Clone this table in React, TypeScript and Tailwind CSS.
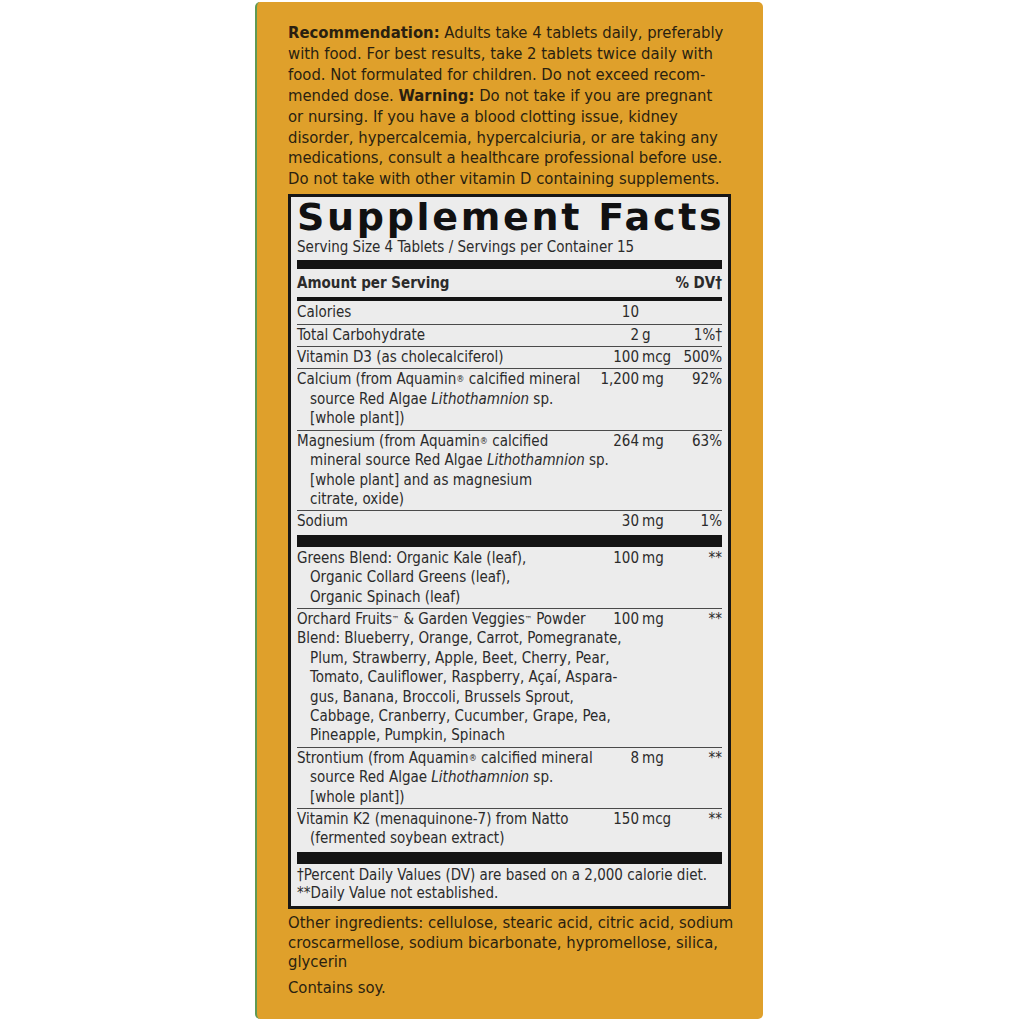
const body = '"Liberation Sans Narrow", "DejaVu Sans Condensed", "Liberation Sans", sans-serif'

type Row = {
  lines: React.ReactNode[]
  num?: string
  unit?: string
  dv?: string
  after?: "thin" | "thick"
  flat?: number[]
}

const Reg = () => <sup className="text-[9px] relative -top-[2px]">®</sup>
const Tm = () => <sup className="text-[8px] relative -top-[2px]">™</sup>

const rows: Row[] = [
  { lines: ["Calories"], num: "10", after: "thin" },
  { lines: ["Total Carbohydrate"], num: "2", unit: "g", dv: "1%†", after: "thin" },
  { lines: ["Vitamin D3 (as cholecalciferol)"], num: "100", unit: "mcg", dv: "500%", after: "thin" },
  {
    lines: [
      <>Calcium (from Aquamin<Reg /> calcified mineral</>,
      <>source Red Algae <i>Lithothamnion</i> sp.</>,
      "[whole plant])",
    ],
    num: "1,200",
    unit: "mg",
    dv: "92%",
    after: "thin",
  },
  {
    lines: [
      <>Magnesium (from Aquamin<Reg /> calcified</>,
      <>mineral source Red Algae <i>Lithothamnion</i> sp.</>,
      "[whole plant] and as magnesium",
      "citrate, oxide)",
    ],
    num: "264",
    unit: "mg",
    dv: "63%",
    after: "thin",
  },
  { lines: ["Sodium"], num: "30", unit: "mg", dv: "1%", after: "thick" },
  {
    lines: ["Greens Blend: Organic Kale (leaf),", "Organic Collard Greens (leaf),", "Organic Spinach (leaf)"],
    num: "100",
    unit: "mg",
    dv: "**",
    after: "thin",
  },
  {
    lines: [
      <>Orchard Fruits<Tm /> &amp; Garden Veggies<Tm /> Powder</>,
      "Blend: Blueberry, Orange, Carrot, Pomegranate,",
      "Plum, Strawberry, Apple, Beet, Cherry, Pear,",
      "Tomato, Cauliflower, Raspberry, Açaí, Aspara-",
      "gus, Banana, Broccoli, Brussels Sprout,",
      "Cabbage, Cranberry, Cucumber, Grape, Pea,",
      "Pineapple, Pumpkin, Spinach",
    ],
    flat: [1],
    num: "100",
    unit: "mg",
    dv: "**",
    after: "thin",
  },
  {
    lines: [
      <>Strontium (from Aquamin<Reg /> calcified mineral</>,
      <>source Red Algae <i>Lithothamnion</i> sp.</>,
      "[whole plant])",
    ],
    num: "8",
    unit: "mg",
    dv: "**",
    after: "thin",
  },
  {
    lines: ["Vitamin K2 (menaquinone-7) from Natto", "(fermented soybean extract)"],
    num: "150",
    unit: "mcg",
    dv: "**",
    after: "thick",
  },
]

function FactRow({ row }: { row: Row }) {
  return (
    <>
      <div className="flex leading-[19.4px] py-[1px]">
        <div className="w-[298px] shrink-0">
          {row.lines.map((l, i) => (
            <div key={i} className={`whitespace-nowrap ${i > 0 && !row.flat?.includes(i) ? "pl-[13px]" : ""}`}>
              {l}
            </div>
          ))}
        </div>
        <div className="flex w-[85px] shrink-0">
          <span className="w-[44px] text-right">{row.num}</span>
          <span className="pl-[3px]">{row.unit}</span>
        </div>
        <div className="flex-1 text-right">{row.dv}</div>
      </div>
      {row.after === "thin" && <div className="h-[1px] bg-[#4a4a4a]" />}
      {row.after === "thick" && <div className="h-[12px] bg-[#141414] mt-[2px] mb-[1px]" />}
    </>
  )
}

export default function App() {
  return (
    <div className="w-[1024px] h-[1024px] bg-white flex pl-[255px] pt-[2px]">
      <div
        className="w-[508px] h-[1017px] bg-[#dfa02b] rounded-[5px] border-l-2 border-[#5f9a55] pl-[31px] pr-[20px] pt-[21px] text-[#2a1f10] text-[16.5px] leading-[20.9px]"
        style={{ fontFamily: body }}
      >
        <div className="whitespace-nowrap">
          <div>
            <b>Recommendation:</b> Adults take 4 tablets daily, preferably
          </div>
          <div>with food. For best results, take 2 tablets twice daily with</div>
          <div>food. Not formulated for children. Do not exceed recom-</div>
          <div>
            mended dose. <b>Warning:</b> Do not take if you are pregnant
          </div>
          <div>or nursing. If you have a blood clotting issue, kidney</div>
          <div>disorder, hypercalcemia, hypercalciuria, or are taking any</div>
          <div>medications, consult a healthcare professional before use.</div>
          <div>Do not take with other vitamin D containing supplements.</div>
        </div>

        <div className="mt-[4px] w-[443px] border-[3px] border-[#161616] bg-[#ececec] px-[6px] pb-[4px] text-[#2b2b2b] text-[15px]">
          <div
            className="text-[38px] leading-[40px] font-bold tracking-[2.7px] text-[#111] whitespace-nowrap"
            style={{ fontFamily: '"DejaVu Sans", "Liberation Sans", sans-serif' }}
          >
            Supplement Facts
          </div>
          <div className="leading-[18px] mt-[1px]">Serving Size 4 Tablets / Servings per Container 15</div>
          <div className="h-[9px] bg-[#141414] mt-[4px]" />
          <div className="flex justify-between font-bold leading-[27px] pt-[1px]">
            <span>Amount per Serving</span>
            <span>% DV†</span>
          </div>
          <div className="h-[4px] bg-[#141414] mb-[1px]" />
          {rows.map((r, i) => (
            <FactRow key={i} row={r} />
          ))}
          <div className="leading-[18px] pt-[1px]">
            <div>†Percent Daily Values (DV) are based on a 2,000 calorie diet.</div>
            <div>**Daily Value not established.</div>
          </div>
        </div>

        <div className="mt-[4px] leading-[19.8px] whitespace-nowrap">
          <div>Other ingredients: cellulose, stearic acid, citric acid, sodium</div>
          <div>croscarmellose, sodium bicarbonate, hypromellose, silica,</div>
          <div>glycerin</div>
        </div>
        <p className="mt-[6px]">Contains soy.</p>
      </div>
    </div>
  )
}
